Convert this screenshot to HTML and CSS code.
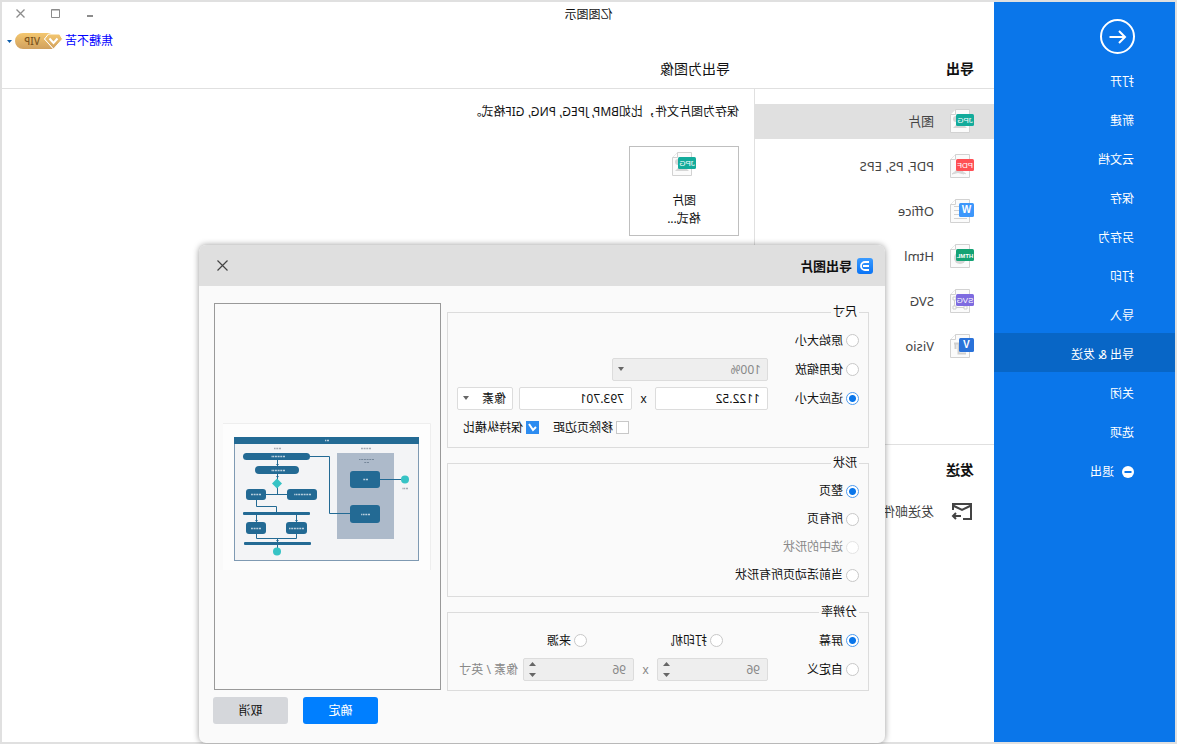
FILE: index.html
```
<!DOCTYPE html>
<html lang="zh-CN">
<head>
<meta charset="utf-8">
<title>亿图图示</title>
<link rel="stylesheet" href="styles.css">
</head>
<body>
<svg class="defs" width="0" height="0" aria-hidden="true">
  <defs>
    <symbol id="sheet" viewBox="0 0 24 24">
      <path d="M4.500 .5H18.500L23.500 5.500V23.500H4.500Z" fill="#fbfbfb" stroke="#d2d2d2"/>
      <path d="M18.500 .5V5.500H23.500" fill="#fff" stroke="#d2d2d2"/>
    </symbol>
    <symbol id="jpg" viewBox="0 0 24 24">
      <use href="#sheet"/>
      <path d="M7 19l5-5 3 2 2-1 4 4z" fill="#d6d6d6"/>
      <circle cx="18" cy="10" r="3" fill="#d6d6d6"/>
      <rect y="5" width="18" height="12" rx="1.500" fill="#13ab9b"/>
      <text x="9" y="14" class="tag">JPG</text>
    </symbol>
    <linearGradient id="gold" x1="0" y1="0" x2="0" y2="1">
      <stop offset="0" stop-color="#f4c76f"/><stop offset="1" stop-color="#d0a05e"/>
    </linearGradient>
    <linearGradient id="blue" x1="0" y1="0" x2="0" y2="1">
      <stop offset="0" stop-color="#3b9bff"/><stop offset="1" stop-color="#0a74f5"/>
    </linearGradient>
  </defs>
</svg>
<div class="window">
  <aside class="side">
    <button class="back" aria-label="返回">
      <svg width="35" height="35" viewBox="0 0 35 35" fill="none" stroke="#fff" stroke-width="2"><circle cx="17.500" cy="17.500" r="16.500"/><path d="M25.500 18H11M16 12l-6 6 6 6"/></svg>
    </button>
    <nav class="menu">
      <a href="#">打开</a>
      <a href="#">新建</a>
      <a href="#">云文档</a>
      <a href="#">保存</a>
      <a href="#">另存为</a>
      <a href="#">打印</a>
      <a href="#">导入</a>
      <a href="#" class="current">导出 &amp; 发送</a>
      <a href="#">关闭</a>
      <a href="#">选项</a>
      <a href="#"><svg width="12" height="12" viewBox="0 0 12 12"><circle cx="6" cy="6" r="6" fill="#fff"/><path d="M2.500 6H9.500" stroke="#0a76ea" stroke-width="2"/></svg>退出</a>
    </nav>
  </aside>

  <div class="titlebar">
    <span></span>
    <span class="app-name">亿图图示</span>
    <div class="controls">
      <button aria-label="最小化"><svg width="9" height="9" viewBox="0 0 9 9"><path d="M2 7H8" stroke="#8c8c8c" stroke-width="2"/></svg></button>
      <button aria-label="最大化"><svg width="9" height="9" viewBox="0 0 9 9"><path d="M.5 .5H8.500V8.500H.5ZM.5 1H8.500" fill="none" stroke="#8c8c8c"/></svg></button>
      <button aria-label="关闭窗口"><svg width="9" height="9" viewBox="0 0 9 9"><path d="M.5 .5L8.500 8.500M8.500 .5L.5 8.500" stroke="#8c8c8c" stroke-width="1.300"/></svg></button>
    </div>
  </div>

  <main class="main">
    <header class="head">
      <div class="user">
        <a href="#">焦糖不苦</a>
        <svg width="48" height="16" viewBox="0 0 48 16">
          <path d="M12 0H40a8 8 0 0 1 0 16H10L19 6Z" fill="url(#gold)"/>
          <path d="M3.500 1H14.500L18.500 6L9.500 16L.5 6Z" fill="url(#gold)" stroke="#fff"/>
          <path d="M5.500 5.500L9.500 10L13.500 5.500" fill="none" stroke="#fff" stroke-width="2"/>
          <text x="23" y="12" class="vip">VIP</text>
        </svg>
        <button aria-label="账户菜单"><svg width="5" height="3" viewBox="0 0 5 3"><path d="M0 0H5L2.500 3Z" fill="#0b5cab"/></svg></button>
      </div>
      <div class="headings">
        <h2>导出</h2>
        <h1>导出为图像</h1>
      </div>
    </header>

    <div class="body">
      <div class="list">
        <nav class="formats">
          <a href="#" class="current"><svg width="24" height="24"><use href="#jpg"/></svg>图片</a>
          <a href="#"><svg width="24" height="24"><use href="#sheet"/><path d="M8 20q6-3 8-8q1 6 6 8q-6-3-12 0" fill="#d6d6d6" stroke="#d6d6d6"/><rect y="5" width="18" height="12" rx="1.500" fill="#ff4f55"/><text x="9" y="14" class="tag">PDF</text></svg>PDF, PS, EPS</a>
          <a href="#"><svg width="24" height="24"><use href="#sheet"/><path d="M7 7.500H20M7 11.500H20M7 15.500H20M7 19.500H20" stroke="#d2d2d2"/><rect y="4" width="15" height="14" rx="1.500" fill="#3d97fb"/><text x="7.500" y="14" class="tag big">W</text></svg>Office</a>
          <a href="#"><svg width="24" height="24"><use href="#sheet"/><circle cx="14" cy="14" r="6" fill="#d6d6d6"/><rect y="5" width="18" height="12" rx="1.500" fill="#14a274"/><text x="9" y="13.500" class="tag small">HTML</text></svg>Html</a>
          <a href="#"><svg width="24" height="24"><use href="#sheet"/><path d="M8.500 9.500H19.500V18.500H8.500Z" fill="none" stroke="#cfcfcf"/><path d="M7 17h3v3H7zM18 17h3v3h-3zM18 8h3v3h-3z" fill="#fff" stroke="#cfcfcf"/><rect y="5" width="18" height="12" rx="1.500" fill="#7e6be0"/><text x="9" y="14" class="tag">SVG</text></svg>SVG</a>
          <a href="#"><svg width="24" height="24"><use href="#sheet"/><path d="M8 19.500H15.500V9.500H20M18.500 9V15" fill="none" stroke="#cfcfcf" stroke-width="2"/><rect y="4" width="15" height="14" rx="1.500" fill="#2a72d9"/><text x="7.500" y="14" class="tag big">V</text></svg>Visio</a>
        </nav>
        <section class="send">
          <h2>发送</h2>
          <a href="#"><svg width="24" height="24" viewBox="0 0 24 24" fill="none" stroke="#444" stroke-width="2"><path d="M11 20H3V5H21V11"/><path d="M3 6.500L12 11L21 6.500"/><path d="M13 17H21M18 14L21 17L18 20"/></svg>发送邮件</a>
        </section>
      </div>
      <div class="content">
        <p>保存为图片文件，比如BMP, JPEG, PNG, GIF格式。</p>
        <button class="card"><svg width="24" height="24"><use href="#jpg"/></svg><span>图片<br>格式...</span></button>
      </div>
    </div>
  </main>

  <form class="dialog" role="dialog" aria-labelledby="dlg-title">
    <header class="dialog-head">
      <svg width="16" height="16" viewBox="0 0 16 16"><rect width="16" height="16" rx="3" fill="url(#blue)"/><path d="M4 4H8a4 4 0 0 1 0 8H4M4 8H10" fill="none" stroke="#fff" stroke-width="1.800"/></svg>
      <h2 id="dlg-title">导出图片</h2>
      <button type="button" aria-label="关闭"><svg width="11" height="11" viewBox="0 0 11 11"><path d="M.5 .5L10.500 10.500M10.500 .5L.5 10.500" stroke="#444" stroke-width="1.200"/></svg></button>
    </header>
    <div class="dialog-body">
      <div class="settings">
        <fieldset class="size">
          <legend>尺寸</legend>
          <div class="row"><label><input type="radio" name="size">原始大小</label></div>
          <div class="row">
            <label><input type="radio" name="size">使用缩放</label>
            <div class="fields"><span class="pick zoom off"><select disabled aria-label="缩放"><option>100%</option></select></span></div>
          </div>
          <div class="row">
            <label><input type="radio" name="size" checked>适应大小</label>
            <div class="fields">
              <input class="text" type="text" value="1122.52" aria-label="宽度">
              <span class="times">x</span>
              <input class="text" type="text" value="793.701" aria-label="高度">
              <span class="pick unit"><select aria-label="单位"><option>像素</option></select></span>
            </div>
          </div>
          <div class="row checks">
            <label><input type="checkbox">移除页边距</label>
            <label><input type="checkbox" checked>保持纵横比</label>
          </div>
        </fieldset>
        <fieldset class="shapes">
          <legend>形状</legend>
          <div class="row"><label><input type="radio" name="shape" checked>整页</label></div>
          <div class="row"><label><input type="radio" name="shape">所有页</label></div>
          <div class="row"><label class="muted"><input type="radio" name="shape" disabled>选中的形状</label></div>
          <div class="row"><label><input type="radio" name="shape">当前活动页所有形状</label></div>
        </fieldset>
        <fieldset>
          <legend>分辨率</legend>
          <div class="row">
            <label><input type="radio" name="dpi" checked>屏幕</label>
            <div class="fields sources">
              <label><input type="radio" name="dpi">打印机</label>
              <label><input type="radio" name="dpi">来源</label>
            </div>
          </div>
          <div class="row">
            <label><input type="radio" name="dpi">自定义</label>
            <div class="fields muted">
              <span class="spin"><input type="text" value="96" disabled aria-label="水平分辨率"><svg width="7" height="15" viewBox="0 0 7 15"><path d="M0 4L3.500 0L7 4ZM0 11L3.500 15L7 11Z" fill="#666"/></svg></span>
              <span class="times">x</span>
              <span class="spin"><input type="text" value="96" disabled aria-label="垂直分辨率"><svg width="7" height="15" viewBox="0 0 7 15"><path d="M0 4L3.500 0L7 4ZM0 11L3.500 15L7 11Z" fill="#666"/></svg></span>
              <span class="per">像素 / 英寸</span>
            </div>
          </div>
        </fieldset>
      </div>
      <div class="preview">
        <svg width="208" height="147" viewBox="0 0 208 147" role="img" aria-label="预览">
          <rect width="208" height="147" fill="#fdfdfd"/>
          <path d="M.5 147V.5H208" fill="none" stroke="#eee"/>
          <rect x="12.500" y="14.500" width="184" height="123" fill="#f3f4f6" stroke="#7f9ab3"/>
          <rect x="12" y="14" width="185" height="7" fill="#236a94"/>
          <rect x="37" y="30" width="57" height="86" fill="#adbaca"/>
          <g fill="none" stroke="#236a94">
            <path d="M30 56.500H51M81 90.500H101.500V33.500H121M153.500 36V71.500M144 71.500H165M174.500 77V83.500H154.500V90M174.500 92V99M134.500 92V99M174.500 111V115.500H134.500V111M153.500 115V126"/>
          </g>
          <g fill="#236a94">
            <rect x="51" y="48" width="30" height="17" rx="3"/>
            <rect x="51" y="82" width="30" height="18" rx="3"/>
            <rect x="121" y="30" width="67" height="7" rx="3.500"/>
            <rect x="132" y="43" width="44" height="8" rx="4"/>
            <rect x="165" y="66" width="20" height="11" rx="3"/>
            <rect x="114" y="66" width="30" height="11" rx="3"/>
            <rect x="121" y="89" width="67" height="3" rx="1"/>
            <rect x="165" y="99" width="20" height="12" rx="3"/>
            <rect x="124" y="99" width="21" height="12" rx="3"/>
            <rect x="120" y="119" width="67" height="3" rx="1"/>
            <path d="M152 41h3l-1.500 2zM152 53h3l-1.500 2zM173 97h3l-1.500 2zM133 97h3l-1.500 2zM152 117h3l-1.500 2z"/>
          </g>
          <g fill="#36c3c5">
            <circle cx="26" cy="56.500" r="4"/>
            <circle cx="154" cy="128.500" r="4"/>
            <path d="M154 55.500L159 60.500L154 65.500L149 60.500Z"/>
          </g>
          <g stroke-width="1.500" stroke-dasharray="2 .7">
            <path stroke="#b9cfdd" d="M102 17.500h4M146 33.500h14M146 47.500h14M170 71.500h10M120 71.500h17M170 105.500h10M127 105.500h15M63 56.500h5M61 91.500h9"/>
            <path stroke="#a4aab4" d="M60 25.500h10M150 25.500h7M23 65.500h6"/>
            <path stroke="#76879a" stroke-width="1" d="M57 36.500h15M62 39.500h5"/>
          </g>
        </svg>
      </div>
    </div>
    <footer class="dialog-foot">
      <button type="button" class="ok">确定</button>
      <button type="button" class="cancel">取消</button>
    </footer>
  </form>
</div>
</body>
</html>
```
FILE: styles.css
```
* { box-sizing: border-box; }

body {
  margin: 0;
  font: 12px/18px "Noto Sans", "Noto Sans CJK SC", sans-serif;
  color: #111;
  overflow-x: hidden;
}

h1, h2, p { margin: 0; }
a { color: inherit; text-decoration: none; }
button, input, select { font: inherit; color: inherit; }
button { padding: 0; border: 0; background: none; }
svg { display: block; flex: none; }
.defs { position: absolute; }

/* The whole window is shown as a mirror image. */
.window {
  position: relative;
  display: grid;
  grid-template-columns: 181px 1fr;
  grid-template-rows: 26px 1fr;
  min-height: 100vh;
  border: 2px solid #e0e0e0;
  background: #fff;
  transform: scaleX(-1);
}

/* Blue side menu */
.side {
  grid-area: 1 / 1 / 3 / 2;
  background: #0a76ea;
  color: #fff;
}
.back { display: block; margin: 17px 0 6px 40px; }
.menu a {
  display: flex;
  align-items: center;
  gap: 8px;
  height: 39px;
  padding: 4px 0 0 41px;
}
.menu .current { background: #0866c6; }

/* Title bar */
.titlebar {
  grid-area: 1 / 1 / 2 / 3;
  display: grid;
  grid-template-columns: 1fr auto 1fr;
  align-items: center;
}
.controls {
  display: flex;
  justify-content: flex-end;
  gap: 26px;
  padding: 0 14px 3px 0;
}

/* Header */
.main {
  grid-area: 2 / 2 / 3 / 3;
  display: flex;
  flex-direction: column;
  min-width: 0;
}
.head { border-bottom: 1px solid #e0e0e0; }
.user {
  display: flex;
  align-items: center;
  justify-content: flex-end;
  gap: 2px;
  height: 26px;
  padding-right: 5px;
  color: #00f;
}
.user button { padding-left: 1px; }
.vip { font-size: 10px; font-weight: 500; fill: #7b541d; }
.headings {
  display: grid;
  grid-template-columns: 240px 1fr;
  align-items: center;
  height: 34px;
  padding: 0 0 4px 20px;
}
h1, h2 { font-size: 14px; line-height: 20px; }
h1 { font-weight: 400; padding-left: 4px; }

/* Export list */
.body {
  display: grid;
  grid-template-columns: 240px 1fr;
  flex: 1;
}
.list {
  border-right: 1px solid #e0e0e0;
  color: #444;
  font-size: 13px;
}
.formats { padding: 15px 0 70px; }
.list a {
  display: flex;
  align-items: center;
  gap: 16px;
  height: 35px;
  margin-bottom: 10px;
  padding: 0 0 1px 20px;
}
.formats .current { background: #e0e0e0; }
.send { border-top: 1px solid #e0e0e0; }
.send h2 { padding: 15px 20px 14px; line-height: 20px; color: #111; }
.tag {
  font: 8px "Liberation Sans", sans-serif;
  fill: #fff;
  text-anchor: middle;
}
.tag.small { font-size: 6px; font-weight: 700; }
.tag.big { font-size: 10px; font-weight: 700; }

/* Content */
.content { padding: 14px 15px; }
.card {
  display: flex;
  flex-direction: column;
  align-items: center;
  gap: 16px;
  width: 110px;
  height: 90px;
  margin-top: 25px;
  padding-top: 5px;
  border: 1px solid #bfbfbf;
}

/* Export dialog */
.dialog {
  position: absolute;
  top: 243px;
  left: 290px;
  width: 686px;
  border-radius: 7px;
  background: #fafafa;
  box-shadow: 0 0 6px rgba(0, 0, 0, .4);
}
.dialog-head {
  display: flex;
  align-items: center;
  gap: 5px;
  height: 41px;
  padding: 0 18px 0 12px;
  border-radius: 7px 7px 0 0;
  background: #dfdfdf;
}
.dialog-head h2 { flex: 1; font-size: 13px; }
.dialog-body {
  display: grid;
  grid-template-columns: 1fr 227px;
  gap: 6px;
  padding: 17px 15px 0 16px;
}
.settings { display: grid; gap: 7px; padding-top: 1px; }

fieldset {
  min-width: 0;
  margin: 0;
  padding: 6px 9px;
  border: 1px solid #dcdcdc;
}
.size { padding-bottom: 5px; }
.shapes { padding-bottom: 7px; }
legend { padding: 0 2px; line-height: 16px; }
.row {
  display: grid;
  grid-template-columns: 91px 1fr;
  align-items: center;
  height: 29px;
}
.shapes .row { grid-template-columns: 1fr; height: 28px; }
.row.checks {
  display: flex;
  justify-content: flex-end;
  gap: 14px;
  padding-right: 6px;
}
label { display: flex; align-items: center; gap: 3px; white-space: nowrap; }
.fields { display: flex; align-items: center; }
.sources { gap: 84px; padding-left: 45px; }
.muted { color: #888; }

input[type="radio"], input[type="checkbox"] {
  appearance: none;
  width: 13px;
  height: 13px;
  margin: 0;
  border: 1px solid #c8c8c8;
  background: #fff;
}
input[type="radio"] { border-radius: 50%; }
input[type="radio"]:checked {
  border-color: #4d9bf0;
  background: radial-gradient(circle, #0a76ea 0 3px, #fff 4px);
}
input[type="radio"]:disabled { border-color: #e4e4e4; }
input[type="checkbox"]:checked {
  border-color: #2d8cf0;
  background: url("data:image/svg+xml,%3Csvg xmlns='http://www.w3.org/2000/svg' viewBox='0 0 11 11'%3E%3Cpath d='M2 5l3 3 4-6' fill='none' stroke='white' stroke-width='2'/%3E%3C/svg%3E") #2d8cf0;
}

.text, .pick, .spin {
  height: 23px;
  border: 1px solid #dcdcdc;
  border-radius: 2px;
  background: #fff;
}
.text { width: 113px; padding: 0 7px; }
.times { width: 23px; text-align: center; }
.pick { position: relative; }
.pick.zoom { width: 156px; }
.pick.unit { width: 56px; margin-left: 6px; }
.pick.off, .spin { background: #eee; color: #888; }
.pick select {
  appearance: none;
  display: block;
  width: 100%;
  height: 100%;
  padding: 0 6px;
  border: 0;
  background: none;
  opacity: 1;
}
.pick::after {
  content: "";
  position: absolute;
  top: 8px;
  right: 5px;
  border: solid transparent;
  border-width: 4px 3px 0;
  border-top-color: #666;
}
.spin { display: flex; align-items: center; width: 111px; padding: 0 5px 0 7px; }
.spin input { flex: 1; min-width: 0; padding: 0; border: 0; background: none; }
.per { margin-left: 5px; white-space: nowrap; }

.preview {
  display: flex;
  align-items: center;
  justify-content: center;
  margin-bottom: 1px;
  border: 1px solid #999;
}

.dialog-foot {
  display: flex;
  justify-content: flex-end;
  gap: 15px;
  padding: 6px 14px 19px;
}
.dialog-foot button { width: 75px; height: 27px; border-radius: 3px; }
.ok { background: #007fff; color: #fff; }
.cancel { background: #d5d7db; }
```
